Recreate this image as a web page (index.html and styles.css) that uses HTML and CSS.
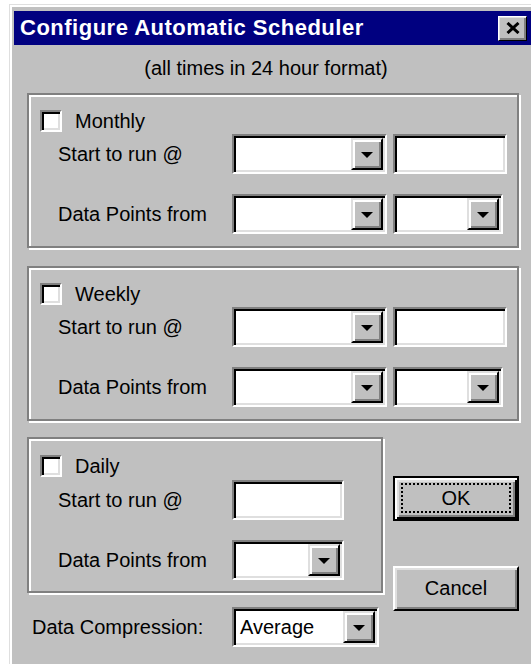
FILE: index.html
```html
<!DOCTYPE html>
<html lang="en">
<head>
<meta charset="utf-8">
<title>Configure Automatic Scheduler</title>
<link rel="stylesheet" href="styles.css">
</head>
<body>
<div class="window">
  <div class="titlebar">
    <span class="title">Configure Automatic Scheduler</span>
    <span class="close" aria-label="Close">
      <svg width="14" height="12" viewBox="0 0 14 12" aria-hidden="true">
        <path d="M1.5 1 L12.5 11 M12.5 1 L1.5 11" stroke="#000" stroke-width="3" fill="none"/>
      </svg>
    </span>
  </div>

  <div class="client">
    <div class="note">(all times in 24 hour format)</div>

    <div class="group">
      <div class="check-row"><span class="checkbox"></span><span>Monthly</span></div>
      <div class="field-row first">
        <span class="label">Start to run @</span>
        <span class="sunken combo"><span class="combo-text"></span><span class="drop"></span></span>
        <span class="sunken edit"></span>
      </div>
      <div class="field-row">
        <span class="label">Data Points from</span>
        <span class="sunken combo"><span class="combo-text"></span><span class="drop"></span></span>
        <span class="sunken combo small"><span class="combo-text"></span><span class="drop"></span></span>
      </div>
    </div>

    <div class="group spaced">
      <div class="check-row"><span class="checkbox"></span><span>Weekly</span></div>
      <div class="field-row first">
        <span class="label">Start to run @</span>
        <span class="sunken combo"><span class="combo-text"></span><span class="drop"></span></span>
        <span class="sunken edit"></span>
      </div>
      <div class="field-row">
        <span class="label">Data Points from</span>
        <span class="sunken combo"><span class="combo-text"></span><span class="drop"></span></span>
        <span class="sunken combo small"><span class="combo-text"></span><span class="drop"></span></span>
      </div>
    </div>

    <div class="lower">
      <div class="lower-left">
        <div class="group daily">
          <div class="check-row"><span class="checkbox"></span><span>Daily</span></div>
          <div class="field-row first">
            <span class="label">Start to run @</span>
            <span class="sunken edit"></span>
          </div>
          <div class="field-row">
            <span class="label">Data Points from</span>
            <span class="sunken combo"><span class="combo-text"></span><span class="drop"></span></span>
          </div>
        </div>
        <div class="compression">
          <span class="label">Data Compression:</span>
          <span class="sunken combo"><span class="combo-text">Average</span><span class="drop"></span></span>
        </div>
      </div>
      <div class="buttons">
        <button class="btn default"><span class="focus">OK</span></button>
        <button class="btn">Cancel</button>
      </div>
    </div>
  </div>
</div>
</body>
</html>
```

FILE: styles.css
```css
html, body {
  margin: 0;
  padding: 0;
  background: #fff;
  overflow: hidden;
}

body {
  font-family: "Liberation Sans", Arial, sans-serif;
  font-size: 20px;
  color: #000;
}

/* dialog frame */
.window {
  margin: 4px 0 0 9px;
  width: 527px;
  height: 690px;
  box-sizing: border-box;
  background: #c0c0c0;
  border-top: 1px solid #dfdfdf;
  border-left: 1px solid #dfdfdf;
  box-shadow: inset 2px 2px #fff;
  padding: 6px 5px 0 4px;
}

.titlebar {
  height: 34px;
  background: #000080;
  display: flex;
  align-items: center;
  justify-content: space-between;
  padding: 0 4px 0 6px;
}

.title {
  color: #fff;
  font-weight: bold;
  font-size: 22px;
  letter-spacing: 0.5px;
}

.close {
  width: 29px;
  height: 25px;
  box-sizing: border-box;
  background: #c0c0c0;
  border: 1px solid;
  border-color: #fff #000 #000 #fff;
  box-shadow: inset 1px 1px #dfdfdf, inset -2px -2px #808080;
  display: flex;
  align-items: center;
  justify-content: center;
}

.client {
  padding-left: 13px;
}

.note {
  width: 492px;
  box-sizing: border-box;
  padding-right: 14px;
  height: 48px;
  line-height: 46px;
  text-align: center;
}

/* etched group frame */
.group {
  box-sizing: border-box;
  width: 492px;
  height: 155px;
  border: 2px solid #808080;
  box-shadow: inset 2px 2px #fff, 2px 2px #fff;
  padding: 15px 0 0 11px;
}

.group.spaced {
  margin-top: 18px;
}

.group.daily {
  width: 356px;
  height: 156px;
  padding-top: 16px;
}

.check-row {
  display: flex;
  align-items: center;
  gap: 13px;
  height: 22px;
}

.checkbox {
  width: 22px;
  height: 22px;
  box-sizing: border-box;
  background: #fff;
  border: 2px solid;
  border-color: #808080 #fff #fff #808080;
  box-shadow: inset 2px 2px #000, inset -2px -2px #dfdfdf;
}

.field-row {
  display: grid;
  grid-template-columns: 168px 155px 114px;
  column-gap: 6px;
  align-items: center;
  height: 40px;
  padding-left: 18px;
  margin-top: 20px;
}

.field-row.first {
  margin-top: 2px;
}

.daily .field-row {
  grid-template-columns: 168px 112px;
}

.daily .field-row.first {
  margin-top: 3px;
}

/* sunken white fields */
.sunken {
  box-sizing: border-box;
  height: 40px;
  background: #fff;
  border: 2px solid;
  border-color: #808080 #fff #fff #808080;
  box-shadow: inset 2px 2px #000, inset -2px -2px #dfdfdf;
}

.combo {
  display: flex;
  align-items: stretch;
  padding: 2px;
}

.combo.small {
  width: 110px;
}

.combo-text {
  flex: 1;
  display: flex;
  align-items: center;
  padding-left: 4px;
}

.drop {
  width: 32px;
  box-sizing: border-box;
  background: #c0c0c0;
  border: 2px solid;
  border-color: #dfdfdf #000 #000 #dfdfdf;
  box-shadow: inset 2px 2px #fff, inset -2px -2px #808080;
  display: flex;
  align-items: center;
  justify-content: center;
  padding-top: 2px;
}

.drop::after {
  content: "";
  width: 0;
  height: 0;
  border-left: 6px solid transparent;
  border-right: 6px solid transparent;
  border-top: 6px solid #000;
}

.lower {
  display: flex;
  gap: 10px;
  margin-top: 16px;
}

.lower-left {
  width: 356px;
}

.compression {
  display: flex;
  align-items: center;
  margin-top: 14px;
}

.compression .label {
  width: 200px;
  padding-left: 5px;
}

.compression .combo {
  width: 147px;
}

.buttons {
  display: flex;
  flex-direction: column;
  gap: 45px;
  padding-top: 39px;
}

.btn {
  width: 126px;
  height: 45px;
  box-sizing: border-box;
  background: #c0c0c0;
  border: 2px solid;
  border-color: #fff #000 #000 #fff;
  box-shadow: inset 2px 2px #dfdfdf, inset -2px -2px #808080;
  font-family: inherit;
  font-size: 20px;
  color: #000;
  display: flex;
  align-items: center;
  justify-content: center;
  padding: 0;
}

.btn.default {
  border-color: #000;
  box-shadow: inset 2px 2px #fff, inset -2px -2px #000, inset 4px 4px #dfdfdf, inset -4px -4px #808080;
}

.focus {
  width: 110px;
  height: 30px;
  box-sizing: border-box;
  border: 2px dotted #000;
  display: flex;
  align-items: center;
  justify-content: center;
  margin-top: -1px;
}
```
